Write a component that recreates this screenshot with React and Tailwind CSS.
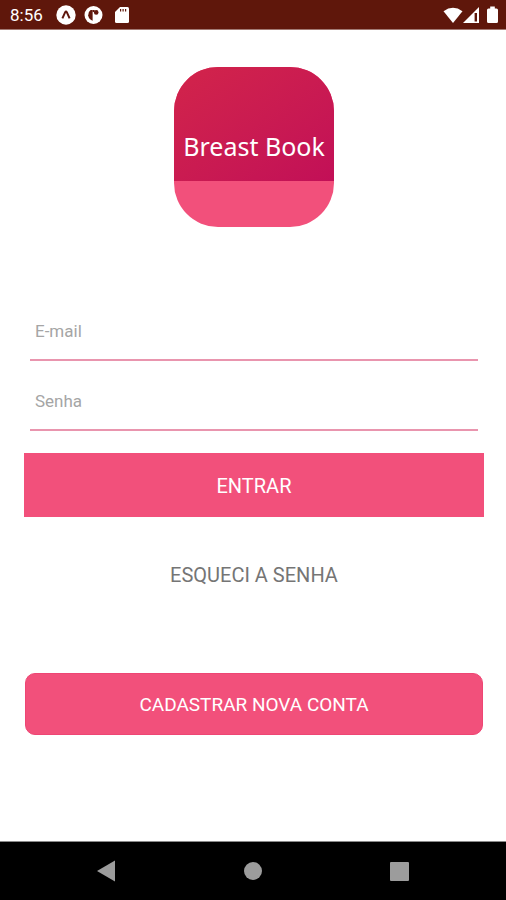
function StatusBar() {
  return (
    <header className="flex h-[30px] items-center justify-between border-b border-[#a27a73] bg-[#5f170b] pr-2 pl-[10px] text-white">
      <div className="flex items-center">
        <span className="w-[46px] text-[17px] leading-5">8:56</span>
        <svg width="20" height="20" viewBox="0 0 20 20" aria-hidden="true">
          <circle cx="10" cy="10" r="9.7" fill="#fff" />
          <path d="M6.4 13.4 L9.2 7.2 Q10 5.8 10.8 7.2 L13.6 13.4" fill="none" stroke="#5f170b" strokeWidth="2" />
        </svg>
        <svg className="ml-2" width="19" height="20" viewBox="0 0 19 20" aria-hidden="true">
          <circle cx="9.5" cy="10" r="9" fill="#fff" />
          <path d="M8.6 15.8 V5 H6.6 Q4.2 6.6 4.2 10.3 Q4.4 14 8.6 15.8 Z" fill="#5f170b" />
          <path d="M8.6 5 H10.6 V7 H8.6 Z" fill="#5f170b" />
          <circle cx="12.2" cy="7.4" r="2.3" fill="#5f170b" />
        </svg>
        <svg className="ml-3" width="14" height="18" viewBox="0 0 14 18" aria-hidden="true">
          <path d="M5 1 H12.5 Q14 1 14 2.5 V15.5 Q14 17 12.5 17 H1.5 Q0 17 0 15.5 V6 Z" fill="#fff" />
          <path d="M5.6 3 V5.4 M8.1 3 V5.4 M10.6 3 V5.4" stroke="#5f170b" strokeWidth="1.2" />
        </svg>
      </div>
      <div className="flex items-center">
        <svg width="20" height="18" viewBox="0 0 20 18" aria-hidden="true">
          <path d="M0.5 5.2 Q10 -1.6 19.5 5.2 L10 17 Z" fill="#fff" />
        </svg>
        <svg width="17" height="18" viewBox="0 0 17 18" aria-hidden="true">
          <path d="M16 1 V17 H0 Z" fill="#fff" />
          <path d="M11.6 7 V15.5 H14 V7 Z" fill="#5f170b" />
        </svg>
        <svg className="ml-[7px]" width="11" height="18" viewBox="0 0 11 18" aria-hidden="true">
          <path d="M3.2 0.5 H7.8 V2.5 H9.5 Q11 2.5 11 4 V15.5 Q11 17 9.5 17 H1.5 Q0 17 0 15.5 V4 Q0 2.5 1.5 2.5 H3.2 Z" fill="#fff" />
        </svg>
      </div>
    </header>
  );
}

function Logo() {
  return (
    <div className="flex size-40 flex-col overflow-hidden rounded-[44px] bg-[#f2507b]">
      <div className="flex h-[114px] items-end justify-center bg-linear-to-br from-[#d2244a] to-[#c20f57] pb-[19px]">
        <span className="font-['Noto_Sans',sans-serif] text-[25px] leading-8 whitespace-nowrap text-white">Breast Book</span>
      </div>
    </div>
  );
}

function Field({ id, label, type }) {
  return (
    <input
      id={id}
      type={type}
      aria-label={label}
      placeholder={label}
      className="block h-[58px] w-full border-b-2 border-[#e995ae] bg-transparent px-[5px] text-[17px] text-gray-700 outline-none placeholder:text-[#a5a5a5]"
    />
  );
}

function NavBar() {
  return (
    <nav className="flex h-[59px] items-center justify-between border-t border-[#8a8a8a] bg-black px-[97px]">
      <button type="button" aria-label="Voltar">
        <svg width="18" height="22" viewBox="0 0 18 22"><path d="M0 11 L18 0.5 V21.5 Z" fill="#9c9c9c" /></svg>
      </button>
      <button type="button" aria-label="Início" className="size-[18px] rounded-full bg-[#9c9c9c]" />
      <button type="button" aria-label="Recentes" className="size-[19px] rounded-[1px] bg-[#9c9c9c]" />
    </nav>
  );
}

export default function App() {
  return (
    <div className="flex min-h-screen flex-col bg-white font-['Roboto',sans-serif]">
      <StatusBar />
      <main className="flex flex-1 flex-col items-center pt-[37px] pr-[22px] pl-6">
        <Logo />
        <form className="mt-[76px] flex w-full flex-col items-center" onSubmit={(e) => e.preventDefault()}>
          <div className="flex w-full flex-col gap-3 px-[6px]">
            <Field id="email" label="E-mail" type="email" />
            <Field id="senha" label="Senha" type="password" />
          </div>
          <button type="submit" className="mt-[22px] h-16 w-full bg-[#f2507b] pt-0.5 text-[20px] text-white">
            ENTRAR
          </button>
          <a href="#senha" className="mt-11 text-[20px] leading-7 text-[#757575]">ESQUECI A SENHA</a>
        </form>
        <div className="mt-[84px] w-full px-px">
          <button type="button" className="h-[62px] w-full rounded-[10px] border border-[#ee4674] bg-[#f2507b] pt-0.5 text-[19px] text-white">
            CADASTRAR NOVA CONTA
          </button>
        </div>
      </main>
      <NavBar />
    </div>
  );
}
